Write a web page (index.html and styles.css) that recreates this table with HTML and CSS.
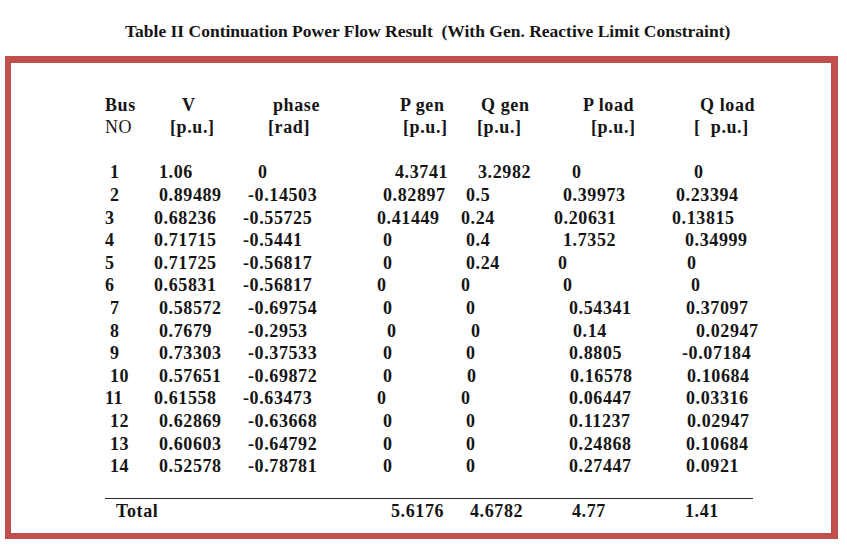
FILE: index.html
```html
<!DOCTYPE html>
<html>
<head>
<meta charset="utf-8">
<link rel="stylesheet" href="styles.css">
</head>
<body>
<div class="title">Table II Continuation Power Flow Result &nbsp;(With Gen. Reactive Limit Constraint)</div>
<div class="frame">
  <div class="table">
    <div class="row"><span>Bus</span><span class="p28">V</span><span class="p30">phase</span><span class="p23">P gen</span><span class="p20">Q gen</span><span class="p29">P load</span><span class="p28">Q load</span></div>
    <div class="row"><span class="light">NO</span><span class="p16">[p.u.]</span><span class="p25">[rad]</span><span class="p26">[p.u.]</span><span class="p16">[p.u.]</span><span class="p37">[p.u.]</span><span class="p22">[&nbsp; p.u.]</span></div>
    <div class="spacer"></div>
    <div class="row"><span class="p5">1</span><span class="p5">1.06</span><span class="p15">0</span><span class="p18">4.3741</span><span class="p17">3.2982</span><span class="p18">0</span><span class="p22">0</span></div>
    <div class="row"><span class="p5">2</span><span class="p5">0.89489</span><span class="p5">-0.14503</span><span class="p6">0.82897</span><span class="p5">0.5</span><span class="p9">0.39973</span><span class="p4">0.23394</span></div>
    <div class="row"><span>3</span><span>0.68236</span><span>-0.55725</span><span>0.41449</span><span>0.24</span><span>0.20631</span><span>0.13815</span></div>
    <div class="row"><span>4</span><span>0.71715</span><span>-0.5441</span><span class="p6">0</span><span class="p5">0.4</span><span class="p9">1.7352</span><span class="p13">0.34999</span></div>
    <div class="row"><span>5</span><span>0.71725</span><span>-0.56817</span><span class="p6">0</span><span class="p5">0.24</span><span class="p4">0</span><span class="p15">0</span></div>
    <div class="row"><span>6</span><span>0.65831</span><span>-0.56817</span><span>0</span><span>0</span><span class="p9">0</span><span class="p19">0</span></div>
    <div class="row"><span class="p5">7</span><span class="p5">0.58572</span><span class="p5">-0.69754</span><span class="p6">0</span><span class="p5">0</span><span class="p15">0.54341</span><span class="p14">0.37097</span></div>
    <div class="row"><span class="p5">8</span><span class="p5">0.7679</span><span class="p5">-0.2953</span><span class="p10">0</span><span class="p10">0</span><span class="p19">0.14</span><span class="p24">0.02947</span></div>
    <div class="row"><span class="p5">9</span><span class="p5">0.73303</span><span class="p5">-0.37533</span><span class="p6">0</span><span class="p5">0</span><span class="p15">0.8805</span><span class="p10">-0.07184</span></div>
    <div class="row"><span class="p5">10</span><span class="p5">0.57651</span><span class="p5">-0.69872</span><span class="p6">0</span><span class="p6">0</span><span class="p16">0.16578</span><span class="p15">0.10684</span></div>
    <div class="row"><span>11</span><span>0.61558</span><span>-0.63473</span><span>0</span><span>0</span><span class="p15">0.06447</span><span class="p14">0.03316</span></div>
    <div class="row"><span class="p5">12</span><span class="p5">0.62869</span><span class="p5">-0.63668</span><span class="p6">0</span><span class="p5">0</span><span class="p15">0.11237</span><span class="p15">0.02947</span></div>
    <div class="row"><span class="p5">13</span><span class="p5">0.60603</span><span class="p5">-0.64792</span><span class="p6">0</span><span class="p5">0</span><span class="p15">0.24868</span><span class="p14">0.10684</span></div>
    <div class="row"><span class="p5">14</span><span class="p5">0.52578</span><span class="p5">-0.78781</span><span class="p6">0</span><span class="p5">0</span><span class="p15">0.27447</span><span class="p14">0.0921</span></div>
    <div class="rule"></div>
    <div class="row total"><span class="label p11">Total</span><span class="p14">5.6176</span><span class="p9">4.6782</span><span class="p18">4.77</span><span class="p13">1.41</span></div>
  </div>
</div>
</body>
</html>
```

FILE: styles.css
```css
body {
  margin: 0;
  background: #ffffff;
  font-family: "Liberation Serif", "Times New Roman", serif;
  color: #151515;
}

.title {
  margin: 21px 0 0 125px;
  font-size: 17.5px;
  font-weight: bold;
  line-height: 20px;
  white-space: nowrap;
}

.frame {
  box-sizing: border-box;
  width: 833px;
  height: 483px;
  margin: 15px 0 0 5px;
  border-style: solid;
  border-color: #c0504d;
  border-width: 7px 7px 6px 6px;
  padding: 30.6px 0 0 94px;
}

.table {
  font-size: 18px;
  font-weight: bold;
  line-height: 22.6px;
  letter-spacing: 0.6px;
}

.row {
  display: grid;
  grid-template-columns: 49px 89px 134px 84px 93px 118px 100px;
  white-space: pre;
}

.light {
  font-weight: normal;
}

.spacer {
  height: 22.6px;
}

.rule {
  width: 648px;
  border-top: 1px solid #2a2a2a;
  margin-top: 20px;
}

.total {
  padding-top: 1.6px;
}

.total .label {
  grid-column: 1 / span 3;
}

.p4 { padding-left: 4px; }
.p5 { padding-left: 5px; }
.p6 { padding-left: 6px; }
.p9 { padding-left: 9px; }
.p10 { padding-left: 10px; }
.p11 { padding-left: 11px; }
.p13 { padding-left: 13px; }
.p14 { padding-left: 14px; }
.p15 { padding-left: 15px; }
.p16 { padding-left: 16px; }
.p17 { padding-left: 17px; }
.p18 { padding-left: 18px; }
.p19 { padding-left: 19px; }
.p20 { padding-left: 20px; }
.p22 { padding-left: 22px; }
.p23 { padding-left: 23px; }
.p24 { padding-left: 24px; }
.p25 { padding-left: 25px; }
.p26 { padding-left: 26px; }
.p28 { padding-left: 28px; }
.p29 { padding-left: 29px; }
.p30 { padding-left: 30px; }
.p37 { padding-left: 37px; }
```
